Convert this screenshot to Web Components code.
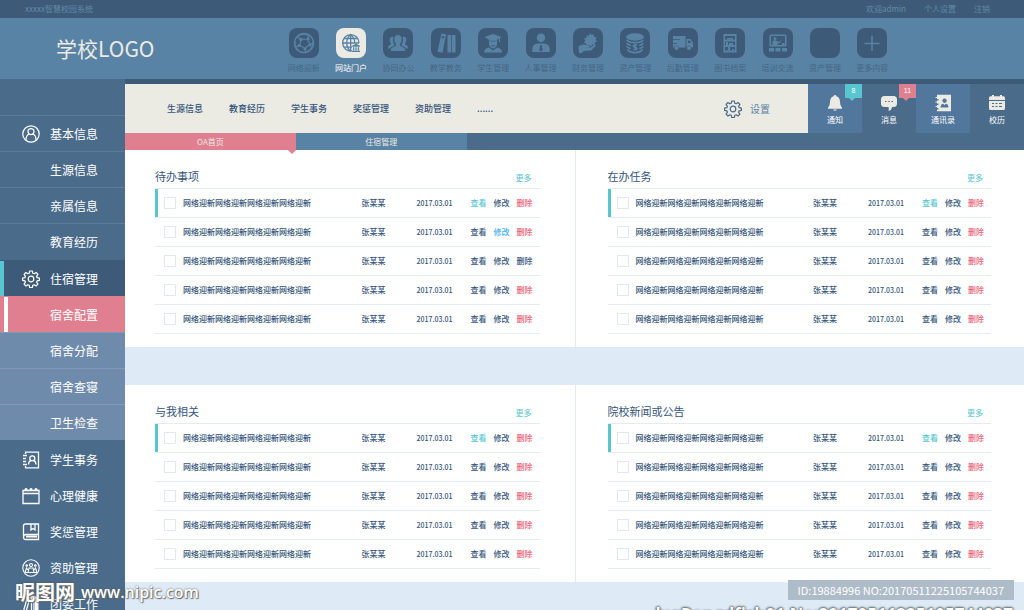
<!DOCTYPE html>
<html lang="zh-CN">
<head>
<meta charset="utf-8">
<title>智慧校园系统</title>
<style>
:root{
  --navy:#3d5b78; --slate:#4b6b8a; --sky:#5983a5; --haze:#6f8bab; --pink:#e07f8f;
  --teal:#58c6cf; --cream:#ebeae3; --band:#deeaf6; --ink:#34557a; --line:#e6ebf1;
}
*{box-sizing:border-box}
body{margin:0;height:100vh;overflow:hidden;background:var(--band);
  font-family:"Noto Sans CJK SC","Noto Sans",sans-serif;font-size:8px;line-height:12px;color:var(--ink)}
</style>
</head>
<body>
<campus-app></campus-app>
<script>
const BASE = `*{box-sizing:border-box}a{color:inherit;text-decoration:none}ul{list-style:none;margin:0;padding:0}
button{font:inherit;color:inherit;border:0;background:none;padding:0;cursor:pointer}svg{display:block}`;

const ICONS = {
  network:'<g fill="none" stroke="currentColor"><circle cx="15" cy="15" r="9.5" stroke-width="1.5"/><path stroke-width="1.1" d="M12 11.5 18 11l3 5-5 4.500-5-3zM12 11.500 8 8.500M18 11l2-4M21 16l4-1M16 20.500l1 4M11 17.500l-5 2M9 8q6-3 12 0M6 13q-1 7 5 11M24 12q1 8-6 12"/></g><g fill="currentColor"><circle cx="12" cy="11.500" r="1.800"/><circle cx="19.500" cy="11" r="1.400"/><circle cx="21" cy="17" r="1.600"/><circle cx="16" cy="21" r="1.600"/><circle cx="10" cy="17.500" r="1.600"/></g>',
  globe:'<g fill="none" stroke="currentColor" stroke-width="1.300"><path d="M16 22.900A8.200 8.200 0 1 1 23 15"/><path d="M14.700 6.500v16.400M6.500 15H23M8 10.500h13.500M8 19.200h8M14.700 6.600q-4 3.400-4 8.400t4 8.200M14.700 6.600q4 3.400 4 8"/></g><path fill="currentColor" d="m20 15.700 4 2v1h-8v-1zM17 19.200h1.300v3.200H17zm2.400 0h1.300v3.200h-1.300zm2.400 0h1.300v3.200h-1.300zM16 22.700h8V24h-8z"/>',
  team:'<g fill="currentColor"><path d="M15 7c2.600 0 3.800 1.800 3.700 4.500 0 2-.8 3.200-1.700 4.300v2l4 2q1.300.7 1.300 3.200H7.700q0-2.500 1.300-3.200l4-2v-2c-.9-1.100-1.700-2.300-1.700-4.300C11.200 8.800 12.400 7 15 7z"/><path d="M10.300 9c-2-.6-3.600.8-3.600 3 0 1.600.6 2.600 1.200 3.300v1.200l-1.600.8Q5 18 5 20.500h2q.5-1.500 4.800-3.300c-1.600-2-2.400-5-1.500-8.200zM19.700 9c2-.6 3.600.8 3.600 3 0 1.600-.6 2.600-1.200 3.300v1.200l1.600.8q1.300.7 1.300 3.200h-2q-.5-1.500-4.800-3.300c1.600-2 2.400-5 1.500-8.200z"/></g>',
  books:'<g fill="currentColor"><path fill-rule="evenodd" d="M10.500 5.500 15 6.300l-3.500 18.400-5-.9zM11.300 8l2 .4-.5 2.200-2-.4z"/><path d="M16.500 7h3.700v17.500h-3.700zM21 7h3.500v17.500H21z"/></g>',
  graduate:'<g fill="currentColor"><path d="m15 6 8.500 3-1.500 1v4h-1v-3.500l-2 1.200v1H11v-1L6.500 9z"/><path d="M11 13h1q3 1 6 0h1v2.500q0 4-4 5-4-1-4-5z"/><path d="M6 24.500q0-4 5-5l4 3 4-3q5 1 5 5z"/></g><path d="M13 17.500q2 1.500 4 0" fill="none" stroke="#3d5b78"/>',
  person:'<g fill="currentColor"><circle cx="15" cy="9.700" r="4.200"/><path fill-rule="evenodd" d="M6.300 24v-3.500q.5-4.500 5.500-5h6.400q5 .5 5.500 5V24zm8-7-1 5 1.700 1.500 1.700-1.500-1-5z"/></g>',
  handgear:'<g fill="currentColor"><path d="m17 5 1.500 2 2.300-.7.200 2.500 2.500.5-1 2.200 1.500 1.900-2.300 1 .1 2.500-2.400-.3-1.400 2-2-1.500-2.200.9-.5-2.500-2.300-.8 1.200-2.100-1.200-2.100 2.500-.8.200-2.400 2.300.5z"/><path d="M5.500 18.500q3-2.500 6-2l5 1.500q1.500 1-.5 1.800h-3q4 .8 6-1.300l3-2q1.500 0 .5 1.500l-4.500 4.500-7 .5-2.500 2H6z"/></g>',
  coins:'<g fill="currentColor"><ellipse cx="15" cy="9" rx="9" ry="3.700"/></g><g fill="none" stroke="currentColor" stroke-width="1.700"><path d="M6.700 12q2 2.500 8.300 2.700 6.300-.2 8.300-2.700M6.700 15.200q1 1.500 4 2.200M6.700 18.400q1 1.500 4 2.200M7.500 21.600q2.500 3 7.500 3t7.500-3M23.300 15.200q-1 1.500-4 2.200M23.300 18.400q-1 1.500-4 2.200"/><path stroke-width="1.400" d="M17 17.300q-2-1-3.300 0t1.300 1.900q2.800 1 1.700 2t-3.500.2M15.200 15.800v6.800"/></g>',
  truck:'<g fill="currentColor"><path d="M5 8h12.500v11.500H11q-1-2-2.500-2T6 19.500H5v-3.800h4v-.7H5v-3h7v-.7H5z"/><path fill-rule="evenodd" d="M18.500 11h4l2.500 4v4.500h-1.500q-1-2-2.500-2t-2.500 2zm1.500 1.500V15h3.300l-1.500-2.500z"/><circle cx="8.500" cy="20" r="2"/><circle cx="21" cy="20" r="2"/></g>',
  shelf:'<path fill="currentColor" fill-rule="evenodd" d="M8.500 6h13v18.500h-13zM10 8v3.500h10V8zm0 5.500V17h10v-3.500zm0 5.500v3.500h10V19z"/><path fill="currentColor" d="M12 10h6v1.500h-6zM11 14h2v3h-2zm3 1h4v2h-4zM13 19h2v3.500h-2zm4 2h2v1.500h-2z"/>',
  training:'<g fill="currentColor"><path fill-rule="evenodd" d="M8 6.500h14q1.500 0 1.500 1.500v9.500q0 1-1.500 1H8q-1.500 0-1.500-1V8q0-1.500 1.500-1.500zM8 8v9h14V8z"/><circle cx="12" cy="10.500" r="1.500"/><path d="M9.500 17v-3.500q1-1.500 3-1.200L16 14l3-2.500-2.500 4-2-.5v2zM19 15h2.500v2H19zM6 20h5v3.500H6zm6.500 0h5v3.500h-5zm6.500 0h5v3.500h-5z"/></g>',
  blank:'',
  plus:'<path d="M15 8v15M7.500 15.500h15" stroke="currentColor" stroke-width="1.500"/>',
  user:'<g fill="none" stroke="currentColor" stroke-width="1.200"><circle cx="9" cy="9" r="8.200"/><circle cx="9" cy="6.600" r="3"/><path d="M4 15q0-5 3.300-6M14 15q0-5-3.300-6"/></g>',
  gear:'<g fill="none" stroke="currentColor" stroke-width="1.200" stroke-linejoin="round"><circle cx="9" cy="9" r="2.800"/><path d="M7.700 1h2.600l.5 2.300 1.300.5 2-1.300 1.800 1.800-1.300 2 .5 1.400 2.300.4v2.200l-2.300.5-.5 1.400 1.300 2-1.800 1.800-2-1.300-1.300.5-.5 2.300H7.700l-.5-2.300-1.300-.5-2 1.300-1.800-1.800 1.300-2-.5-1.400L.6 10.300V8.100l2.300-.4.5-1.400-1.300-2 1.800-1.800 2 1.300 1.300-.5z"/></g>',
  card:'<g fill="none" stroke="currentColor" stroke-width="1.300"><path d="M3.500 3V1.200h13v15.600h-13V15M1 4.500h4M1 7.500h3M1 10.500h3M1 13.500h4"/><circle cx="10.300" cy="7.300" r="2.500"/><path d="M6.500 13.500q.3-3.700 2.500-4M14 13.500q-.3-3.700-2.500-4"/></g>',
  box:'<g fill="none" stroke="currentColor" stroke-width="1.300"><path d="M1 3.500h16v13H1zM1 6.500h16"/></g><path fill="currentColor" d="M2.500 2q1.500-2 3 0v2h-3zM7.500 2q1.500-2 3 0v2h-3zM12.500 2q1.500-2 3 0v2h-3z"/>',
  book:'<g fill="none" stroke="currentColor" stroke-width="1.300"><path d="M1.500 13V3q0-2 2-2h13v10.500H4q-2.500 0-2.500 2.600T4 16.500h12.500v-5M9 1v6l2-1.500L13 7V1"/></g><path fill="currentColor" d="M4 12.500h11v2H4z"/>',
  people:'<g fill="none" stroke="currentColor" stroke-width="1.100"><circle cx="9" cy="9" r="8.200"/><circle cx="9" cy="6" r="1.500"/><circle cx="4.700" cy="6.500" r=".8"/><circle cx="13.300" cy="6.500" r=".8"/><path d="M6 13.500l1-4.500h4l1 4.500M3 13.500l1.500-4.500L6 11M15 13.500 13.500 9 12 11M3 13.500h12"/></g>',
  files:'<g fill="none" stroke="currentColor" stroke-width="1.300"><path d="m1.500 16 4-14 2.500.700-4 14zM9.500 1.500H12v15H9.500z"/></g><path fill="currentColor" d="M13 1.500h3.500v15H13z"/>',
  bell:'<path fill="currentColor" d="M9 1q1.300 0 1.400 1.300Q14 3.500 14 8q0 4 2 5.700v1.100H2v-1.100Q4 12 4 8q0-4.500 3.600-5.700Q7.700 1 9 1zM7 15.500h4q-2 2.500-4 0z"/>',
  chat:'<path fill="currentColor" d="M4.500 2h9Q17 2 17 5.500v4q0 3.500-3.500 3.500H12q-.5 3.500-3.500 4 .8-1.500 0-4h-4Q1 13 1 9.500v-4Q1 2 4.500 2z"/><path d="M5 7.500h1.500M8.300 7.500h1.500M11.500 7.500H13" stroke="#4b6b8a"/>',
  contacts:'<path fill="currentColor" fill-rule="evenodd" d="M3 .8h14v16.400H3v-1.700h1.500V14H3v-3h1.500V9.500H3v-3h1.500V5H3zM10.500 4.500a2.200 2.200 0 1 0 .1 0zM6.500 13.500h8q-.3-3.500-2.500-3.800l-1.500 1.200L9 9.700q-2.200.3-2.500 3.800z"/><path d="M1.500 3.500h3M1.500 8h3M1.500 12.500h3" stroke="currentColor"/>',
  calendar:'<path fill="currentColor" fill-rule="evenodd" d="M2.500 2.200H4V1h2v1.200h6V1h2v1.200h1.500Q17 2.200 17 4v2H1V4q0-1.800 1.500-1.800zM1 7h16v7.500q0 1.500-1.500 1.500h-13Q1 16 1 14.500zm3 2v1h2V9zm3.500 0v1h2V9zM11 9v1h3V9zm-7 3v1h2v-1zm3.500 0v1h2v-1zm3.500 0v1h3v-1z"/>'
};

function define(name, css, html){
  customElements.define(name, class extends HTMLElement{
    constructor(){super();this.attachShadow({mode:'open'})}
    connectedCallback(){
      this.shadowRoot.innerHTML = `<style>${BASE}${css}</style>${typeof html==='function'?html(this):html}`;
    }
  });
}

/* Line or solid glyph; box="30" for the app tiles, 18 for everything else */
define('ui-icon', `:host{display:block;width:var(--size,18px);height:var(--size,18px)}svg{width:100%;height:100%}`,
  el => `<svg viewBox="0 0 ${el.getAttribute('box')||18} ${el.getAttribute('box')||18}" aria-hidden="true">${ICONS[el.getAttribute('name')]}</svg>`);

define('top-bar', `:host{display:flex;justify-content:space-between;align-items:center;height:18px;
  padding:0 34px 0 25px;background:var(--navy);color:#6289aa}nav{display:flex;gap:18px}`,
  `<span>xxxxx智慧校园系统</span><nav><a href="#">欢迎admin</a><a href="#">个人设置</a><a href="#">注销</a></nav>`);

define('app-link', `:host{display:block;color:var(--sky)}
  a{display:flex;flex-direction:column;align-items:center;gap:4px}
  ui-icon{--size:30px;background:var(--navy);border-radius:8px}
  span{color:#446686;white-space:nowrap}
  :host([active]) ui-icon{background:var(--cream)}
  :host([active]) span{color:#fff}`,
  el => `<a href="#"><ui-icon box="30" name="${el.getAttribute('icon')}"></ui-icon><span><slot></slot></span></a>`);

define('app-header', `:host{display:grid;grid-template-columns:280px 1fr 128px;height:61px;background:var(--sky)}
  h1{margin:0;padding:16px 0 0 56px;font-size:21px;line-height:28px;font-weight:400;color:var(--cream)}
  nav{display:grid;grid-auto-flow:column;grid-auto-columns:1fr;padding-top:10px}`,
  `<h1>学校LOGO</h1><nav>${[
    ['network','网络迎新'],['globe','网站门户',1],['team','协同办公'],['books','教学教务'],['graduate','学生管理'],
    ['person','人事管理'],['handgear','财务管理'],['coins','资产管理'],['truck','后勤管理'],['shelf','图书档案'],
    ['training','培训交流'],['blank','资产管理'],['plus','更多内容']
  ].map(([i,t,a])=>`<app-link icon="${i}"${a?' active':''}>${t}</app-link>`).join('')}</nav>`);

define('side-item', `:host{display:block;border-top:1px solid transparent;height:36px}
  :host([ruled]){border-top-color:#5c7c9a}
  a{display:grid;grid-template-columns:50px 1fr;align-items:center;height:100%;font-size:12px;line-height:18px;color:#fff}
  ui-icon{margin-left:22px}
  :host([open]){background:var(--navy);box-shadow:inset 4px 0 var(--teal)}
  :host([sub]){background:var(--haze);border-top-color:#819ab7}
  :host([current]){background:var(--pink);border-top-color:var(--pink);box-shadow:inset 4px 0 var(--pink),inset 8px 0 #fff}`,
  el => `<a href="#"><span>${el.hasAttribute('icon')?`<ui-icon name="${el.getAttribute('icon')}"></ui-icon>`:''}</span><slot></slot></a>`);

define('side-nav', `:host{display:block;background:var(--slate);padding-top:36px}
  .group{padding-bottom:1px}`,
  `<nav><div class="group"><side-item ruled icon="user">基本信息</side-item><side-item ruled>生源信息</side-item>
  <side-item ruled>亲属信息</side-item><side-item ruled>教育经历</side-item></div>
  <div class="group"><side-item open icon="gear">住宿管理</side-item><side-item sub current>宿舍配置</side-item><side-item sub>宿舍分配</side-item>
  <side-item sub>宿舍查寝</side-item><side-item sub>卫生检查</side-item></div>
  <side-item icon="card">学生事务</side-item><side-item icon="box">心理健康</side-item><side-item icon="book">奖惩管理</side-item>
  <side-item icon="people">资助管理</side-item><side-item icon="files">团委工作</side-item></nav>`);

define('quick-tile', `:host{display:block;position:relative;color:#fff}
  :host([raised]){background:#52779c}
  a{display:flex;flex-direction:column;align-items:center;gap:2px;padding-top:10px}
  ui-icon{color:var(--cream)}
  b{position:absolute;top:0;right:0;width:17px;height:14px;text-align:center;font:400 7px/14px "Liberation Sans",sans-serif;background:var(--tone)}
  b::after{content:"";position:absolute;left:4px;top:14px;border:3px solid transparent;border-top-color:var(--tone);border-bottom:0}`,
  el => `<a href="#"><ui-icon name="${el.getAttribute('icon')}"></ui-icon><slot></slot></a>${el.hasAttribute('count')?`<b>${el.getAttribute('count')}</b>`:''}`);

define('tool-bar', `:host{display:grid;grid-template-columns:1fr repeat(4,54px);height:54px;border-top:5px solid var(--navy);background:var(--slate)}
  .menu{display:flex;align-items:center;justify-content:space-between;background:var(--cream);padding:0 38px 0 42px}
  nav{display:flex;gap:26px;font-size:9px;line-height:14px;font-weight:500}
  button{display:flex;align-items:center;gap:8px;font-size:10px;line-height:16px;color:var(--sky)}
  button ui-icon{color:var(--slate)}`,
  `<div class="menu"><nav><a href="#">生源信息</a><a href="#">教育经历</a><a href="#">学生事务</a><a href="#">奖惩管理</a><a href="#">资助管理</a><a href="#" aria-label="更多">......</a></nav>
  <button type="button"><ui-icon name="gear"></ui-icon>设置</button></div>
  <quick-tile raised icon="bell" count="8" style="--tone:var(--teal)">通知</quick-tile>
  <quick-tile icon="chat" count="11" style="--tone:var(--pink)">消息</quick-tile>
  <quick-tile raised icon="contacts">通讯录</quick-tile><quick-tile icon="calendar">校历</quick-tile>`);

define('tab-strip', `:host{display:flex;height:17px;background:var(--slate);color:var(--cream)}
  a{position:relative;flex:0 0 19%;text-align:center;line-height:17px;background:var(--sky)}
  a[aria-current]{background:var(--pink)}
  a[aria-current]::after{content:"";position:absolute;right:0;top:17px;border:4px solid transparent;border-top-color:var(--pink);border-bottom:0}`,
  `<a href="#" aria-current="page">OA首页</a><a href="#">住宿管理</a>`);

define('task-panel', `:host{display:block;background:#fff;padding:13px 35px 13px 30px}
  :host([divided]){border-left:1px solid var(--line);padding-left:32px;padding-right:33px}
  header{display:flex;justify-content:space-between;align-items:center;height:25px;padding-right:8px}
  h2{margin:0;font-size:11px;line-height:16px;font-weight:400}
  header a{color:var(--teal);padding-top:4px}
  table{width:100%;border-collapse:separate;border-spacing:0;table-layout:fixed;border-top:1px solid var(--line);font-weight:500}
  td{height:29px;padding:0;border-bottom:1px solid var(--line);vertical-align:middle;white-space:nowrap}
  .check{width:28px;padding-left:9px}.name{width:55px}.date{width:54px;font-size:7px}.ops{width:69px}
  tr:first-child .check{box-shadow:inset 3px 0 var(--teal)}
  input{appearance:none;display:block;margin:0;width:12px;height:12px;border:1px solid #e3e8ef;background:#fff}
  .ops div{display:flex;gap:7px}
  .view{color:var(--teal)}.edit{color:#42aef0}.del{color:#ea6478}`,
  el => {
    const mixed = el.hasAttribute('mixed');
    const rows = [0,1,2,3,4].map(i => `<tr><td class="check"><input type="checkbox" id="c${i}"></td>
      <td><label for="c${i}">网络迎新网络迎新网络迎新网络迎新</label></td><td class="name">张某某</td><td class="date">2017.03.01</td>
      <td class="ops"><div><a href="#"${i===0?' class="view"':''}>查看</a><a href="#"${mixed&&i===1?' class="edit"':''}>修改</a><a href="#"${mixed&&i===2?'':' class="del"'}>删除</a></div></td></tr>`).join('');
    return `<header><h2 id="t">${el.getAttribute('heading')}</h2><a href="#">更多</a></header><table aria-labelledby="t"><tbody>${rows}</tbody></table>`;
  });

define('image-credit', `:host{display:block;position:absolute;inset:0;pointer-events:none;overflow:hidden}
  p{position:absolute;margin:0;white-space:nowrap;color:#fff}
  .site{left:15px;bottom:6px;display:flex;align-items:center;gap:6px;font:600 16px/24px "Open Sans",sans-serif;text-shadow:0 0 2px #555,1px 1px 1px #777}
  .site span{font:700 20px/24px "Noto Sans CJK SC",sans-serif}
  .id{right:10px;bottom:10px;padding:0 10px;background:#aebbc8;font-size:11px;line-height:20px}
  .by{right:11px;bottom:-15px;font:700 17px/20px "Open Sans",sans-serif;text-shadow:0 0 2px #222,0 0 3px #222}`,
  `<p class="site"><span>昵图网</span>www.nipic.com</p><p class="by">by:Rongdfish01 No:20170511225105744037</p><p class="id">ID:19884996 NO:20170511225105744037</p>`);

define('campus-app', `:host{display:grid;grid-template-rows:auto auto 1fr;position:relative;height:100vh;overflow:hidden}
  .body{display:grid;grid-template-columns:125px 1fr;min-height:0}
  .panels{display:grid;grid-template-columns:1fr 1fr;row-gap:38px;align-content:start}`,
  `<top-bar></top-bar><app-header></app-header>
  <div class="body"><side-nav></side-nav><main><tool-bar></tool-bar><tab-strip></tab-strip>
  <div class="panels"><task-panel mixed heading="待办事项"></task-panel><task-panel divided heading="在办任务"></task-panel>
  <task-panel heading="与我相关"></task-panel><task-panel divided heading="院校新闻或公告"></task-panel></div></main></div>
  <image-credit></image-credit>`);
</script>
</body>
</html>
